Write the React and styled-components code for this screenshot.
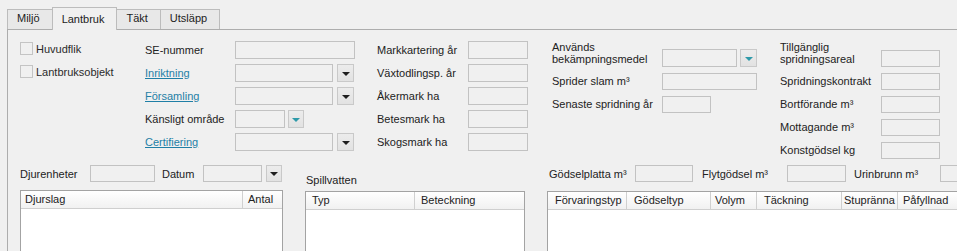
import React from 'react';
import styled, { createGlobalStyle } from 'styled-components';

const GlobalStyle = createGlobalStyle`
  html, body {
    margin: 0;
    padding: 0;
    background: #f0f0f0;
    overflow: hidden;
  }
  body {
    font-family: "Liberation Sans", Arial, sans-serif;
    font-size: 11px;
    color: #222222;
  }
`;

const Window = styled.div`
  width: 957px;
  height: 251px;
  padding: 7px 0 0 7px;
  box-sizing: border-box;
  overflow: hidden;
`;

const TabStrip = styled.div`
  display: flex;
  align-items: flex-end;
  height: 22px;
`;

const Tab = styled.div`
  position: relative;
  z-index: ${({ $active }) => ($active ? 1 : 0)};
  box-sizing: border-box;
  height: ${({ $active }) => ($active ? '23px' : '20px')};
  margin-bottom: ${({ $active }) => ($active ? '-1px' : '0')};
  padding: ${({ $active }) => ($active ? '5px' : '2px')} 12px 0 9px;
  border: 1px solid #bcbcbc;
  border-bottom: none;
  background: ${({ $active }) => ($active ? '#f0f0f0' : '#e8e8e8')};
  line-height: 13px;
  & + & {
    margin-left: -1px;
  }
`;

const Panel = styled.div`
  width: 1000px;
  height: 230px;
  border-top: 1px solid #adadad;
  border-left: 1px solid #adadad;
  display: flex;
  flex-direction: column;
`;

const TopSection = styled.div`
  display: grid;
  grid-template-columns: 102px 209px 152px 205px 160px;
  column-gap: 23px;
  align-items: start;
  padding-left: 12px;
`;

const CheckColumn = styled.div`
  display: flex;
  flex-direction: column;
  gap: 10px;
  padding-top: 12px;
`;

const CheckRow = styled.label`
  display: flex;
  align-items: center;
  gap: 3px;
  height: 13px;
  color: #2a2a2a;
`;

const CheckBox = styled.span`
  width: 11px;
  height: 11px;
  border: 1px solid #c4c4c4;
  background: #f0f0f0;
`;

const FieldGrid = styled.div`
  display: grid;
  grid-template-columns: ${({ $label }) => $label}px auto;
  grid-template-rows: ${({ $rows }) => $rows};
  row-gap: ${({ $gap }) => $gap}px;
  align-items: center;
  padding-top: ${({ $top }) => $top}px;
`;

const Label = styled.span`
  white-space: nowrap;
  line-height: 13px;
`;

const WrapLabel = styled.span`
  align-self: start;
  line-height: 12px;
  margin-top: 2px;
`;

const LinkLabel = styled.span`
  color: #1f7fa6;
  text-decoration: underline;
  line-height: 13px;
`;

const TextBox = styled.div`
  box-sizing: border-box;
  width: ${({ $w }) => $w}px;
  height: ${({ $h = 18 }) => $h}px;
  border: 1px solid #c2c2c2;
  background: #f0f0f0;
  flex-shrink: 0;
`;

const Combo = styled.div`
  display: flex;
  align-items: center;
  gap: ${({ $gap = 4 }) => $gap}px;
  align-self: ${({ $end }) => ($end ? 'end' : 'center')};
`;

const DropButton = styled.div`
  box-sizing: border-box;
  width: ${({ $w = 17 }) => $w}px;
  height: ${({ $h = 18 }) => $h}px;
  border: 1px solid #c9c9c9;
  background: linear-gradient(#ececec, #e2e2e2);
  display: flex;
  align-items: center;
  justify-content: center;
  flex-shrink: 0;
  &::after {
    content: '';
    margin-top: 1px;
    border-left: 4px solid transparent;
    border-right: 4px solid transparent;
    border-top: 4px solid ${({ $tint }) => ($tint ? '#2e9aa9' : '#1e1e1e')};
  }
`;

const EndBox = styled(TextBox)`
  align-self: end;
`;

const BottomSection = styled.div`
  display: flex;
  gap: 22px;
  padding-left: 12px;
  margin-top: 6px;
`;

const Group = styled.div`
  display: flex;
  flex-direction: column;
  flex-shrink: 0;
  width: ${({ $w }) => $w}px;
  gap: ${({ $gap }) => $gap}px;
  padding-top: ${({ $top = 0 }) => $top}px;
`;

const FieldRow = styled.div`
  display: flex;
  align-items: center;
  height: 17px;
  padding-left: ${({ $pad = 0 }) => $pad}px;
`;

const RowLabel = styled.span`
  width: ${({ $w }) => $w}px;
  margin-left: ${({ $ml = 0 }) => $ml}px;
  white-space: nowrap;
  flex-shrink: 0;
`;

const Caption = styled.div`
  line-height: 13px;
  padding-left: 1px;
`;

const ListView = styled.div`
  height: 80px;
  border: 1px solid #a3a3a3;
  background: #ffffff;
`;

const ListHeader = styled.div`
  display: flex;
  height: 17px;
  border-bottom: 1px solid #cfcfcf;
  background: linear-gradient(#ffffff, #f1f1f1);
`;

const HeadCell = styled.div`
  box-sizing: border-box;
  width: ${({ $w }) => ($w ? `${$w}px` : 'auto')};
  flex: ${({ $w }) => ($w ? '0 0 auto' : '1')};
  padding-left: ${({ $pad = 5 }) => $pad}px;
  line-height: 17px;
  border-right: ${({ $last }) => ($last ? 'none' : '1px solid #d0d0d0')};
  white-space: nowrap;
  overflow: hidden;
`;

const App = () => (
  <>
    <GlobalStyle />
    <Window>
      <TabStrip>
        <Tab>Miljö</Tab>
        <Tab $active>Lantbruk</Tab>
        <Tab>Täkt</Tab>
        <Tab>Utsläpp</Tab>
      </TabStrip>
      <Panel>
        <TopSection>
          <CheckColumn>
            <CheckRow><CheckBox />Huvudflik</CheckRow>
            <CheckRow><CheckBox />Lantbruksobjekt</CheckRow>
          </CheckColumn>

          <FieldGrid $label={90} $rows="repeat(5, 18px)" $gap={5} $top={11}>
            <Label>SE-nummer</Label>
            <TextBox $w={120} />
            <LinkLabel>Inriktning</LinkLabel>
            <Combo><TextBox $w={98} /><DropButton /></Combo>
            <LinkLabel>Församling</LinkLabel>
            <Combo><TextBox $w={98} /><DropButton /></Combo>
            <Label>Känsligt område</Label>
            <Combo $gap={3}><TextBox $w={50} /><DropButton $w={16} $tint /></Combo>
            <LinkLabel>Certifiering</LinkLabel>
            <Combo><TextBox $w={98} /><DropButton /></Combo>
          </FieldGrid>

          <FieldGrid $label={91} $rows="repeat(5, 18px)" $gap={5} $top={11}>
            <Label>Markkartering år</Label>
            <TextBox $w={60} />
            <Label>Växtodlingsp. år</Label>
            <TextBox $w={60} />
            <Label>Åkermark ha</Label>
            <TextBox $w={60} />
            <Label>Betesmark ha</Label>
            <TextBox $w={60} />
            <Label>Skogsmark ha</Label>
            <TextBox $w={60} />
          </FieldGrid>

          <FieldGrid $label={110} $rows="28px repeat(2, 17px)" $gap={6} $top={9}>
            <WrapLabel>Används<br />bekämpningsmedel</WrapLabel>
            <Combo $gap={3} $end><TextBox $w={75} $h={18} /><DropButton $tint /></Combo>
            <Label>Sprider slam m³</Label>
            <TextBox $w={95} $h={17} />
            <Label>Senaste spridning år</Label>
            <TextBox $w={49} $h={17} />
          </FieldGrid>

          <FieldGrid $label={101} $rows="28px repeat(4, 17px)" $gap={6} $top={9}>
            <WrapLabel>Tillgänglig<br />spridningsareal</WrapLabel>
            <EndBox $w={59} $h={17} />
            <Label>Spridningskontrakt</Label>
            <TextBox $w={59} $h={17} />
            <Label>Bortförande m³</Label>
            <TextBox $w={59} $h={17} />
            <Label>Mottagande m³</Label>
            <TextBox $w={59} $h={17} />
            <Label>Konstgödsel kg</Label>
            <TextBox $w={59} $h={17} />
          </FieldGrid>
        </TopSection>

        <BottomSection>
          <Group $w={263} $gap={8}>
            <FieldRow>
              <RowLabel $w={70}>Djurenheter</RowLabel>
              <TextBox $w={65} $h={17} />
              <RowLabel $w={41} $ml={7}>Datum</RowLabel>
              <Combo><TextBox $w={59} $h={17} /><DropButton $w={16} $h={17} /></Combo>
            </FieldRow>
            <ListView>
              <ListHeader>
                <HeadCell $w={222} $pad={4}>Djurslag</HeadCell>
                <HeadCell $last>Antal</HeadCell>
              </ListHeader>
            </ListView>
          </Group>

          <Group $w={220} $gap={4} $top={9}>
            <Caption>Spillvatten</Caption>
            <ListView>
              <ListHeader>
                <HeadCell $w={109} $pad={6}>Typ</HeadCell>
                <HeadCell $last $pad={6}>Beteckning</HeadCell>
              </ListHeader>
            </ListView>
          </Group>

          <Group $w={440} $gap={9}>
            <FieldRow $pad={2}>
              <RowLabel $w={86}>Gödselplatta m³</RowLabel>
              <TextBox $w={58} $h={17} />
              <RowLabel $w={85} $ml={9}>Flytgödsel m³</RowLabel>
              <TextBox $w={59} $h={17} />
              <RowLabel $w={86} $ml={8}>Urinbrunn m³</RowLabel>
              <TextBox $w={60} $h={17} />
            </FieldRow>
            <ListView>
              <ListHeader>
                <HeadCell $w={79} $pad={7}>Förvaringstyp</HeadCell>
                <HeadCell $w={84} $pad={7}>Gödseltyp</HeadCell>
                <HeadCell $w={46} $pad={4}>Volym</HeadCell>
                <HeadCell $w={85} $pad={7}>Täckning</HeadCell>
                <HeadCell $w={56} $pad={2}>Stupränna</HeadCell>
                <HeadCell $w={62} $pad={5}>Påfyllnad</HeadCell>
                <HeadCell $last />
              </ListHeader>
            </ListView>
          </Group>
        </BottomSection>
      </Panel>
    </Window>
  </>
);

export default App;
